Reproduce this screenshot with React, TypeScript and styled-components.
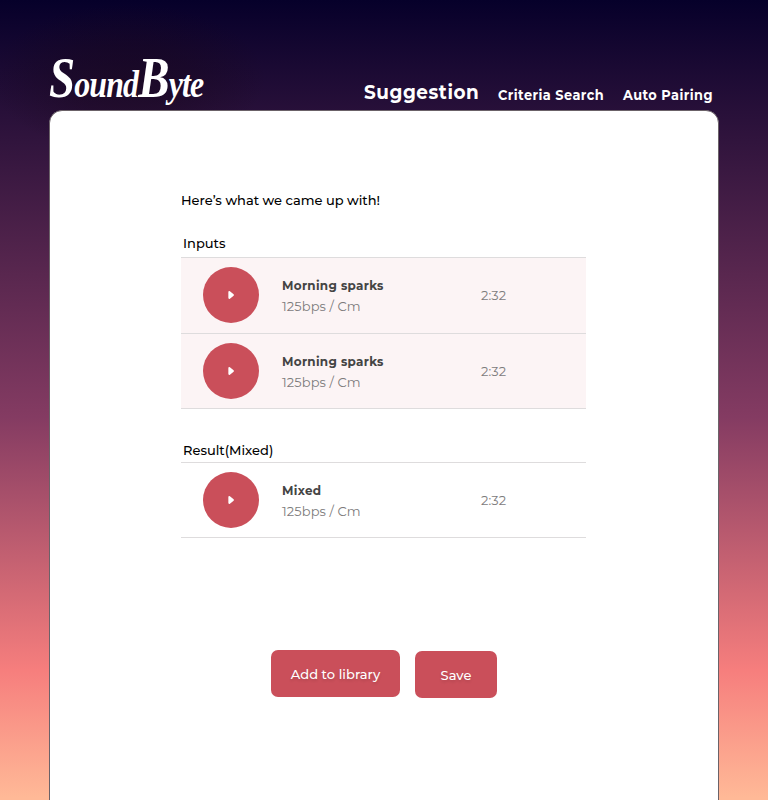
import React from "react";
import styled, { createGlobalStyle } from "styled-components";

const GlobalStyle = createGlobalStyle`
  * { box-sizing: border-box; }
  body { margin: 0; }
  h1, h2, p { margin: 0; font-weight: 500; }
  button { border: 0; padding: 0; color: inherit; font: inherit; letter-spacing: inherit; cursor: pointer; }
`;

const Page = styled.div`
  height: 800px;
  overflow: hidden;
  display: flex;
  flex-direction: column;
  padding: 0 49px;
  font: 500 13px/20px Montserrat, Inter, sans-serif;
  color: #000;
  background:
    radial-gradient(ellipse 138px 75px at 128px 79px, rgba(24, 7, 25, 0.5), rgba(24, 7, 25, 0.35) 45%, transparent),
    linear-gradient(#06002a 0, #843b62 417px, #f67e7d 670px, #ffb997 798px);
`;

const Header = styled.header`
  height: 110px;
  flex: none;
  display: flex;
  justify-content: space-between;
  align-items: flex-end;
  padding-right: 8px;
  color: #fff;
`;

const Logo = styled.h1`
  width: 154px;
  height: 57px;
  font: italic 700 38px/60px "Liberation Serif", serif;
  letter-spacing: -1px;
  white-space: nowrap;
  transform: scaleX(0.838);
  transform-origin: left center;
`;

const Capital = styled.span`
  font-size: 56px;
  line-height: 50px;
`;

const Nav = styled.nav`
  display: flex;
  align-items: baseline;
  height: 32px;
`;

const NavLink = styled.a<{ $width: number; $active?: boolean }>`
  width: ${(p) => p.$width}px;
  font-size: ${(p) => (p.$active ? 20 : 14)}px;
  line-height: 28px;
  font-weight: 700;
  letter-spacing: ${(p) => (p.$active ? 0.6 : 0.5)}px;
  white-space: nowrap;
  transform: translateY(${(p) => (p.$active ? 0 : 1)}px) scaleX(0.92);
  transform-origin: left center;
`;

const Card = styled.main`
  height: 720px;
  flex: none;
  padding: 79px 131px 0;
  background: #fff;
  border: 1px solid #6b6268;
  border-radius: 13px;
`;

const Intro = styled.p`
  white-space: nowrap;
`;

const Section = styled.section<{ $gap: number }>`
  margin-top: ${(p) => p.$gap}px;
  width: 405px;
`;

const SectionTitle = styled.h2<{ $height: number }>`
  height: ${(p) => p.$height}px;
  padding-left: 2px;
  font-size: 13px;
`;

const Tracks = styled.div`
  border-bottom: 1px solid #dedcdd;
`;

const Track = styled.div<{ $tinted?: boolean; $height: number }>`
  height: ${(p) => p.$height}px;
  display: grid;
  grid-template-columns: 79px 199px 1fr;
  align-items: start;
  padding: 9px 0 0 22px;
  border-top: 1px solid #dedcdd;
  background: ${(p) => (p.$tinted ? "#fcf4f5" : "#fff")};
`;

const Play = styled.button`
  width: 56px;
  height: 56px;
  display: grid;
  place-items: center;
  border-radius: 50%;
  background: #ca4f5a;
`;

const TrackText = styled.div`
  padding-top: 8px;
  line-height: 21px;
`;

const TrackName = styled.p`
  color: #444;
  font-weight: 700;
  letter-spacing: 0.35px;
  transform: scaleX(0.92);
  transform-origin: left center;
`;

const Detail = styled.p`
  color: #7d7b7c;
  font-weight: 400;
  letter-spacing: 0.1px;
`;

const Duration = styled(Detail)`
  padding-top: 18px;
`;

const Actions = styled.div`
  display: flex;
  gap: 15px;
  margin: 112px 0 0 90px;
`;

const Action = styled.button<{ $width: number; $drop?: number }>`
  width: ${(p) => p.$width}px;
  height: 47px;
  margin-top: ${(p) => p.$drop ?? 0}px;
  border-radius: 7px;
  background: #ca4f5a;
  color: #fff;
  letter-spacing: 0.05px;
  text-shadow: 0 2px 3px rgba(0, 0, 0, 0.12);
`;

function TrackRow({ name, tinted, height = 75 }: { name: string; tinted?: boolean; height?: number }) {
  return (
    <Track $tinted={tinted} $height={height}>
      <Play aria-label={`Play ${name}`}>
        <svg width="8" height="10" viewBox="0 0 8 10">
          <path d="M2.3 2 6 5 2.3 8Z" fill="#fff" stroke="#fff" strokeWidth="1.9" strokeLinejoin="round" />
        </svg>
      </Play>
      <TrackText>
        <TrackName>{name}</TrackName>
        <Detail>125bps / Cm</Detail>
      </TrackText>
      <Duration>2:32</Duration>
    </Track>
  );
}

export default function App() {
  return (
    <Page>
      <GlobalStyle />
      <Header>
        <Logo><Capital>S</Capital>ound<Capital>B</Capital>yte</Logo>
        <Nav>
          <NavLink $width={134} $active>Suggestion</NavLink>
          <NavLink $width={125}>Criteria Search</NavLink>
          <NavLink $width={88}>Auto Pairing</NavLink>
        </Nav>
      </Header>
      <Card>
        <Intro>Here’s what we came up with!</Intro>
        <Section $gap={23}>
          <SectionTitle $height={24}>Inputs</SectionTitle>
          <Tracks>
            <TrackRow name="Morning sparks" tinted height={76} />
            <TrackRow name="Morning sparks" tinted />
          </Tracks>
        </Section>
        <Section $gap={31}>
          <SectionTitle $height={22}>Result(Mixed)</SectionTitle>
          <Tracks>
            <TrackRow name="Mixed" />
          </Tracks>
        </Section>
        <Actions>
          <Action $width={129}>Add to library</Action>
          <Action $width={82} $drop={1}>Save</Action>
        </Actions>
      </Card>
    </Page>
  );
}
